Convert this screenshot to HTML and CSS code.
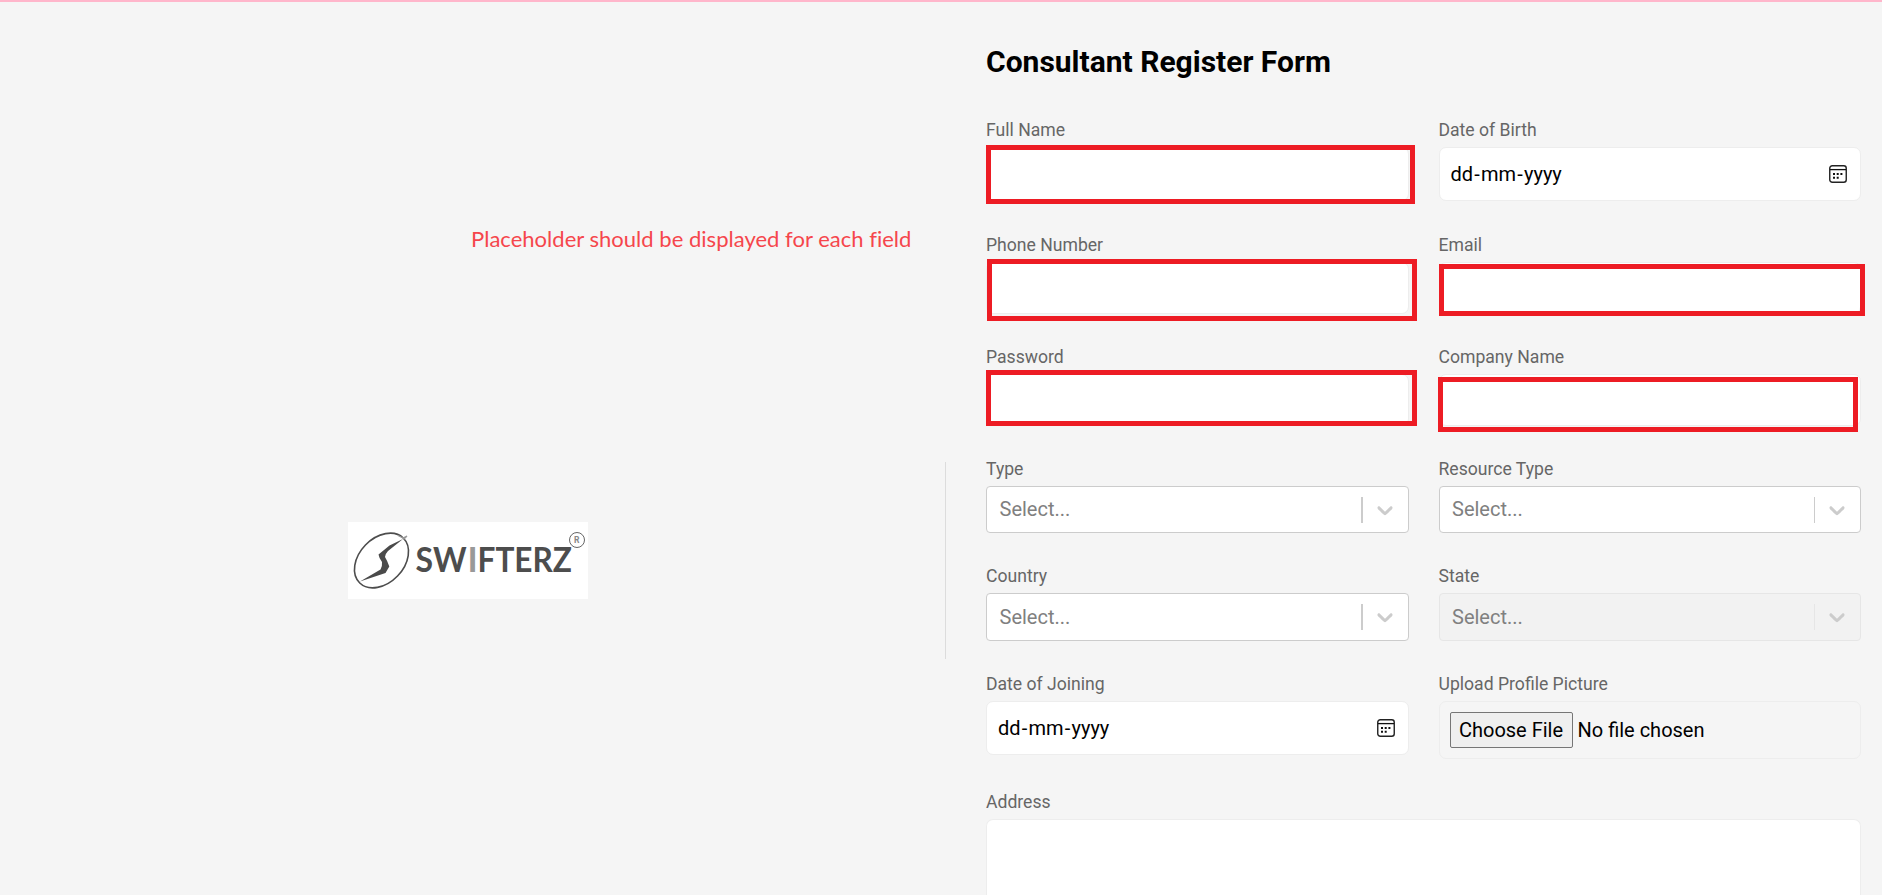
FILE: index.html
```html
<!DOCTYPE html>
<html lang="en">
<head>
<meta charset="utf-8">
<title>Consultant Register Form</title>
<link rel="stylesheet" href="styles.css">
</head>
<body>
<svg class="defs" width="0" height="0" aria-hidden="true">
  <symbol id="calendar" viewBox="0 0 18 18">
    <rect x=".75" y=".75" width="16.5" height="16.5" rx="2.5" fill="none" stroke="#222" stroke-width="1.4"/>
    <path d="M1 4.6H17" stroke="#111" stroke-width="1.3"/>
    <path d="M4 8h2v2H4zM7.7 8h2v2h-2zM11.4 8h2v2h-2zM4 11.700h2v2H4zM7.700 11.700h2v2h-2z" fill="#111"/>
  </symbol>
  <symbol id="chevron" viewBox="0 0 20 20">
    <path d="M4.516 7.548c0.436-0.446 1.043-0.481 1.576 0l3.908 3.747 3.908-3.747c0.533-0.481 1.141-0.446 1.574 0 0.436 0.445 0.408 1.197 0 1.615-0.406 0.418-4.695 4.502-4.695 4.502-0.217 0.223-0.502 0.335-0.787 0.335s-0.57-0.112-0.789-0.335c0 0-4.287-4.084-4.695-4.502s-0.436-1.17 0-1.615z" fill="#ccc"/>
  </symbol>
</svg>
<div class="page">
  <aside class="brand">
    <p class="note">Placeholder should be displayed for each field</p>
    <svg class="logo" viewBox="0 0 240 77" role="img" aria-label="Swifterz">
      <rect width="240" height="77" fill="#fff"/>
      <ellipse cx="33.5" cy="38.5" rx="31.3" ry="22.3" transform="rotate(-46 33.5 38.5)" fill="none" stroke="#4d4d4d" stroke-width="1.600"/>
      <path d="M55 17 41.500 23.500 30.500 32.500Q31 36 34 40 34.500 44 32.500 47.500L12 59.500 37.500 51 41.300 44.500Q39.500 39 37 35 37.500 31.500 40 29L55 17z" fill="#4a4a4a"/>
      <path d="M50 13.500l5 2.500 4-2-3.500 3.500" fill="none" stroke="#999" stroke-width="1.200"/>
      <g class="logo-text">
        <text x="67.500" y="50.300" textLength="51" lengthAdjust="spacingAndGlyphs">SW</text>
        <text class="logo-light" x="119.500" y="50.300">I</text>
        <text x="129.500" y="50.300" textLength="94.500" lengthAdjust="spacingAndGlyphs">FTERZ</text>
      </g>
      <circle cx="229" cy="18" r="7.500" fill="none" stroke="#666" stroke-width="1"/>
      <text class="logo-reg" x="226" y="21.200">R</text>
    </svg>
  </aside>
  <div class="divider"></div>
  <main class="form">
    <h1 class="title">Consultant Register Form</h1>
    <div class="grid">
      <div class="field"><label class="label">Full Name</label><div class="control tall"><i class="mark mark-name"></i></div></div>
      <div class="field"><label class="label">Date of Birth</label><div class="control tall date"><span class="date-text">dd<b class="dash">-</b>mm<b class="dash">-</b>yyyy</span><svg class="cal"><use href="#calendar"/></svg></div></div>
      <div class="field"><label class="label">Phone Number</label><div class="control"><i class="mark mark-phone"></i></div></div>
      <div class="field"><label class="label">Email</label><div class="control"><i class="mark mark-email"></i></div></div>
      <div class="field"><label class="label">Password</label><div class="control"><i class="mark mark-password"></i></div></div>
      <div class="field"><label class="label">Company Name</label><div class="control"><i class="mark mark-company"></i></div></div>
      <div class="field"><label class="label">Type</label><div class="select"><span class="hint">Select...</span><span class="sep thick"></span><svg class="chev"><use href="#chevron"/></svg></div></div>
      <div class="field"><label class="label">Resource Type</label><div class="select"><span class="hint">Select...</span><span class="sep"></span><svg class="chev"><use href="#chevron"/></svg></div></div>
      <div class="field"><label class="label">Country</label><div class="select high"><span class="hint">Select...</span><span class="sep thick"></span><svg class="chev"><use href="#chevron"/></svg></div></div>
      <div class="field"><label class="label">State</label><div class="select high disabled"><span class="hint">Select...</span><span class="sep"></span><svg class="chev"><use href="#chevron"/></svg></div></div>
      <div class="field"><label class="label">Date of Joining</label><div class="control tall date"><span class="date-text">dd<b class="dash">-</b>mm<b class="dash">-</b>yyyy</span><svg class="cal"><use href="#calendar"/></svg></div></div>
      <div class="field"><label class="label">Upload Profile Picture</label><div class="control file"><button class="choose">Choose File</button><span class="file-name">No file chosen</span></div></div>
      <div class="field wide"><label class="label">Address</label><div class="control address"></div></div>
    </div>
  </main>
</div>
</body>
</html>
```
FILE: styles.css
```css
* { box-sizing: border-box; }
body {
  margin: 0;
  height: 895px;
  overflow: hidden;
  background: #f5f5f5;
  border-top: 2px solid #ffb6cb;
  font-family: Roboto, sans-serif;
}
.defs { position: absolute; }
.page { display: flex; align-items: flex-start; height: 893px; }
.brand { position: relative; width: 945px; padding: 520px 0 0 348px; }
.logo { display: block; width: 240px; height: 77px; }
.logo-text { font: 700 34.5px Lato, sans-serif; fill: #4d4d4d; }
.logo-light { fill: #999; }
.logo-reg { font: 700 8.5px Roboto, sans-serif; fill: #888; }
.note {
  position: absolute;
  left: 471px;
  top: 222px;
  margin: 0;
  font: 400 22px/30px Lato, sans-serif;
  letter-spacing: .02px;
  color: #f5464c;
  white-space: nowrap;
}
.divider { width: 1px; height: 197px; margin-top: 460px; background: #dcdcdc; }
.form { width: 875px; margin-left: 40px; padding-top: 40px; }
.title { margin: 0 0 36px; font-size: 30px; line-height: 40px; font-weight: 700; color: #000; }
.grid {
  display: grid;
  grid-template-columns: 1fr 1fr;
  grid-template-rows: 115px 112px 112px 107px 108px 118px 105px;
  column-gap: 30px;
}
.wide { grid-column: 1 / 3; }
.label { display: block; height: 24px; margin-bottom: 5px; font-size: 17.6px; line-height: 24px; color: #666; }
.control {
  position: relative;
  display: flex;
  align-items: center;
  height: 52px;
  padding: 0 13px 0 11px;
  border: 1px solid #ededed;
  border-radius: 7px;
  background: #fff;
}
.tall { height: 54px; }
.date { justify-content: space-between; }
.date-text { font-size: 20px; color: #000; }
.dash { margin: 0 1.2px; font-weight: 400; }
.cal { width: 18px; height: 18px; }
.mark { position: absolute; border: 5px solid #ed1c24; }
.mark-name { left: -1px; top: -3px; width: 429px; height: 59px; }
.mark-phone { left: 0; top: -4px; width: 430px; height: 62px; }
.mark-password { left: -1px; top: -5px; width: 431px; height: 56px; }
.mark-email { left: -1px; top: 1px; width: 426px; height: 52px; }
.mark-company { left: -2px; top: 2px; width: 420px; height: 55px; }
.select {
  display: flex;
  align-items: center;
  height: 47px;
  padding: 0 10px 0 12.5px;
  border: 1px solid #ccc;
  border-radius: 4px;
  background: #fff;
}
.high { height: 48px; }
.hint { flex: 1; padding-bottom: 1px; font-size: 20px; color: #808080; }
.sep { width: 1px; height: 26px; background: #ccc; margin-right: 9px; }
.thick { width: 2px; }
.chev { width: 26px; height: 26px; }
.disabled { background: #f2f2f2; border-color: #e6e6e6; }
.disabled .sep { background: #e6e6e6; }
.file { height: 58px; padding: 0 10px; background: transparent; }
.choose {
  width: 123px;
  height: 36px;
  margin: 0 5px 0 0;
  padding: 0;
  border: 1px solid #767676;
  border-radius: 2px;
  background: #efefef;
  font: 400 20px/34px Roboto, sans-serif;
  color: #000;
}
.file-name { font-size: 20px; color: #000; }
.address { height: 76px; border-bottom: 0; border-radius: 7px 7px 0 0; }
```
